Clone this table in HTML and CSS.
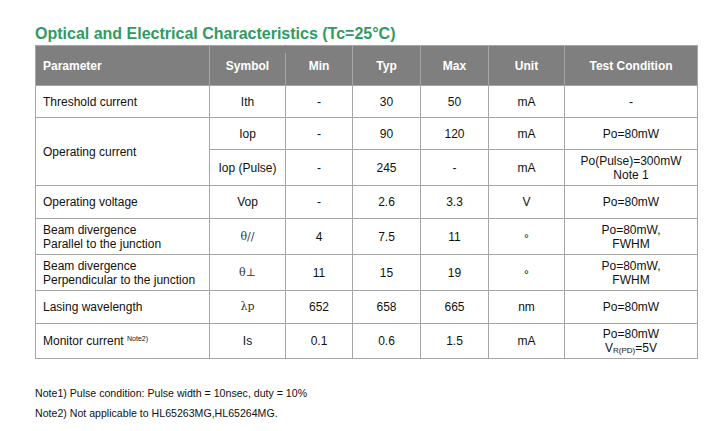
FILE: index.html
```html
<!DOCTYPE html>
<html>
<head>
<meta charset="utf-8">
<link rel="stylesheet" href="styles.css">
</head>
<body>
<div class="page">
  <h1 class="title">Optical and Electrical Characteristics (Tc=25°C)</h1>
  <table class="spec">
    <colgroup>
      <col class="c-param"><col class="c-sym"><col class="c-min"><col class="c-typ"><col class="c-max"><col class="c-unit"><col class="c-cond">
    </colgroup>
    <thead>
      <tr class="h-head">
        <th class="left">Parameter</th>
        <th class="sym">Symbol</th>
        <th>Min</th>
        <th>Typ</th>
        <th>Max</th>
        <th>Unit</th>
        <th>Test Condition</th>
      </tr>
    </thead>
    <tbody>
      <tr class="h32">
        <td class="left">Threshold current</td>
        <td>Ith</td><td>-</td><td>30</td><td>50</td><td>mA</td><td>-</td>
      </tr>
      <tr class="h32">
        <td class="left" rowspan="2">Operating current</td>
        <td>Iop</td><td>-</td><td>90</td><td>120</td><td>mA</td><td>Po=80mW</td>
      </tr>
      <tr class="h36">
        <td>Iop (Pulse)</td><td>-</td><td>245</td><td>-</td><td>mA</td><td class="two">Po(Pulse)=300mW<br>Note 1</td>
      </tr>
      <tr class="h33">
        <td class="left">Operating voltage</td>
        <td>Vop</td><td>-</td><td>2.6</td><td>3.3</td><td>V</td><td>Po=80mW</td>
      </tr>
      <tr class="h36">
        <td class="left two">Beam divergence<br>Parallel to the junction</td>
        <td class="greek">θ//</td><td>4</td><td>7.5</td><td>11</td><td><span class="deg">°</span></td><td class="two">Po=80mW,<br>FWHM</td>
      </tr>
      <tr class="h36">
        <td class="left two">Beam divergence<br>Perpendicular to the junction</td>
        <td class="greek">θ⊥</td><td>11</td><td>15</td><td>19</td><td><span class="deg">°</span></td><td class="two">Po=80mW,<br>FWHM</td>
      </tr>
      <tr class="h33">
        <td class="left">Lasing wavelength</td>
        <td class="greek">λp</td><td>652</td><td>658</td><td>665</td><td>nm</td><td>Po=80mW</td>
      </tr>
      <tr class="h35">
        <td class="left">Monitor current <sup class="note">Note2)</sup></td>
        <td>Is</td><td>0.1</td><td>0.6</td><td>1.5</td><td>mA</td><td class="two">Po=80mW<br>V<sub class="sub">R(PD)</sub>=5V</td>
      </tr>
    </tbody>
  </table>
  <div class="notes">
    <p>Note1) Pulse condition: Pulse width = 10nsec, duty = 10%</p>
    <p>Note2) Not applicable to HL65263MG,HL65264MG.</p>
  </div>
</div>
</body>
</html>
```

FILE: styles.css
```css
html, body {
  margin: 0;
  padding: 0;
  background: #ffffff;
}

.page {
  padding: 25px 0 0 35px;
  font-family: "Liberation Sans", Arial, sans-serif;
  color: #111111;
}

.title {
  margin: 0 0 2px 0;
  font-size: 16px;
  line-height: 18px;
  font-weight: bold;
  color: #2f9b62;
}

.spec {
  border-collapse: collapse;
  table-layout: fixed;
  width: 662px;
  font-size: 12px;
  line-height: 14px;
}

.c-param { width: 174px; }
.c-sym { width: 76px; }
.c-min { width: 67px; }
.c-typ { width: 68px; }
.c-max { width: 68px; }
.c-unit { width: 76px; }
.c-cond { width: 133px; }

.spec th,
.spec td {
  border: 1px solid #a6a6a6;
  padding: 0 4px;
  text-align: center;
  vertical-align: middle;
}

.spec th {
  background: #7f7f7f;
  color: #ffffff;
  font-weight: bold;
}

.spec th.sym {
  position: relative;
  border-right-color: #7f7f7f;
}

.spec th.sym::after {
  content: "";
  position: absolute;
  right: -1px;
  top: 7px;
  bottom: 0;
  width: 1px;
  background: #a6a6a6;
}

.spec .left {
  text-align: left;
  padding-left: 7px;
}

.h-head { height: 40px; }
.h32 { height: 32px; }
.h33 { height: 33px; }
.h35 { height: 35px; }
.h36 { height: 36px; }

.two {
  line-height: 14px;
}

.greek {
  font-family: "DejaVu Serif", "Liberation Serif", serif;
  font-size: 11px;
  color: #333333;
}

.deg {
  display: inline-block;
  font-size: 12px;
  position: relative;
  top: 2px;
}

.note {
  font-size: 7px;
  vertical-align: 4px;
  line-height: 0;
}

.sub {
  font-size: 8px;
  vertical-align: -1px;
  line-height: 0;
}

.notes {
  margin-top: 28px;
  font-size: 10.6px;
  line-height: 13px;
}

.notes p {
  margin: 0 0 7px 0;
}
```
